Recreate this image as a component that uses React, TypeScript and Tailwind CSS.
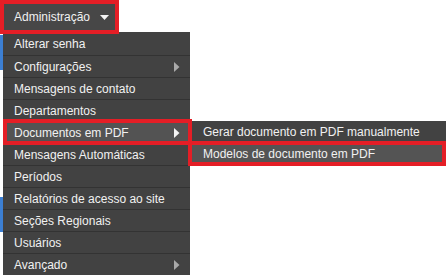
import type { ReactNode } from "react";

const items = [
  { label: "Alterar senha" },
  { label: "Configurações", sub: true },
  { label: "Mensagens de contato" },
  { label: "Departamentos" },
  { label: "Documentos em PDF", sub: true, active: true },
  { label: "Mensagens Automáticas" },
  { label: "Períodos" },
  { label: "Relatórios de acesso ao site" },
  { label: "Seções Regionais" },
  { label: "Usuários" },
  { label: "Avançado", sub: true },
];

function ArrowRight({ light }: { light?: boolean }) {
  return (
    <svg width="6" height="10" viewBox="0 0 6 10" className="shrink-0">
      <path d="M0 0 L5.5 5 L0 10 Z" fill={light ? "#f4f4f4" : "#a9a9a9"} />
    </svg>
  );
}

function Row({ children, first }: { children: ReactNode; first?: boolean }) {
  return (
    <div
      className={
        "flex h-[22px] items-center justify-between pl-[11px] pr-[10px] " +
        (first ? "" : "border-t border-[#333333]")
      }
    >
      {children}
    </div>
  );
}

export default function App() {
  return (
    <div className="relative h-[277px] w-[448px] overflow-hidden bg-white font-['Liberation_Sans',Arial,sans-serif] text-[12px] leading-none text-[#f1f1f1]">
      {/* page content peeking out behind the menu */}
      <div className="absolute left-0 top-[35px] h-[35px] w-[3px] bg-[#3c7fd3]" />
      <div className="absolute left-0 top-[197px] h-[35px] w-[3px] bg-[#3c7fd3]" />

      <div className="relative z-20 flex">
        <div className="flex h-[34px] w-[119px] items-center gap-[10px] border-4 border-[#e41e26] bg-[#474747] pl-[10px]">
          <span>Administração</span>
          <svg width="9" height="5" viewBox="0 0 9 5">
            <path d="M0 0 L9 0 L4.5 5 Z" fill="#f4f4f4" />
          </svg>
        </div>
      </div>

      <div className="relative z-10 -mt-[2px] ml-[3px] w-[187px] bg-[#424242] pt-px">
        {items.map((it, i) =>
          it.active ? (
            <div key={it.label} className="relative bg-[#535353]">
              <Row first={i === 0}>
                <span>{it.label}</span>
                <ArrowRight light />
              </Row>
              <div className="pointer-events-none absolute -bottom-[2px] -right-[2px] -top-[2px] left-0 border-4 border-[#e41e26]" />
              <div className="absolute left-[189px] top-0 w-[254px] bg-[#424242]">
                <Row first>
                  <span>Gerar documento em PDF manualmente</span>
                </Row>
                <div className="relative bg-[#545454]">
                  <Row first>
                    <span>Modelos de documento em PDF</span>
                  </Row>
                  <div className="pointer-events-none absolute -bottom-[1px] -left-[4px] -top-[2px] right-0 border-4 border-[#e41e26]" />
                </div>
              </div>
            </div>
          ) : (
            <Row key={it.label} first={i === 0}>
              <span>{it.label}</span>
              {it.sub && <ArrowRight />}
            </Row>
          )
        )}
      </div>
    </div>
  );
}
